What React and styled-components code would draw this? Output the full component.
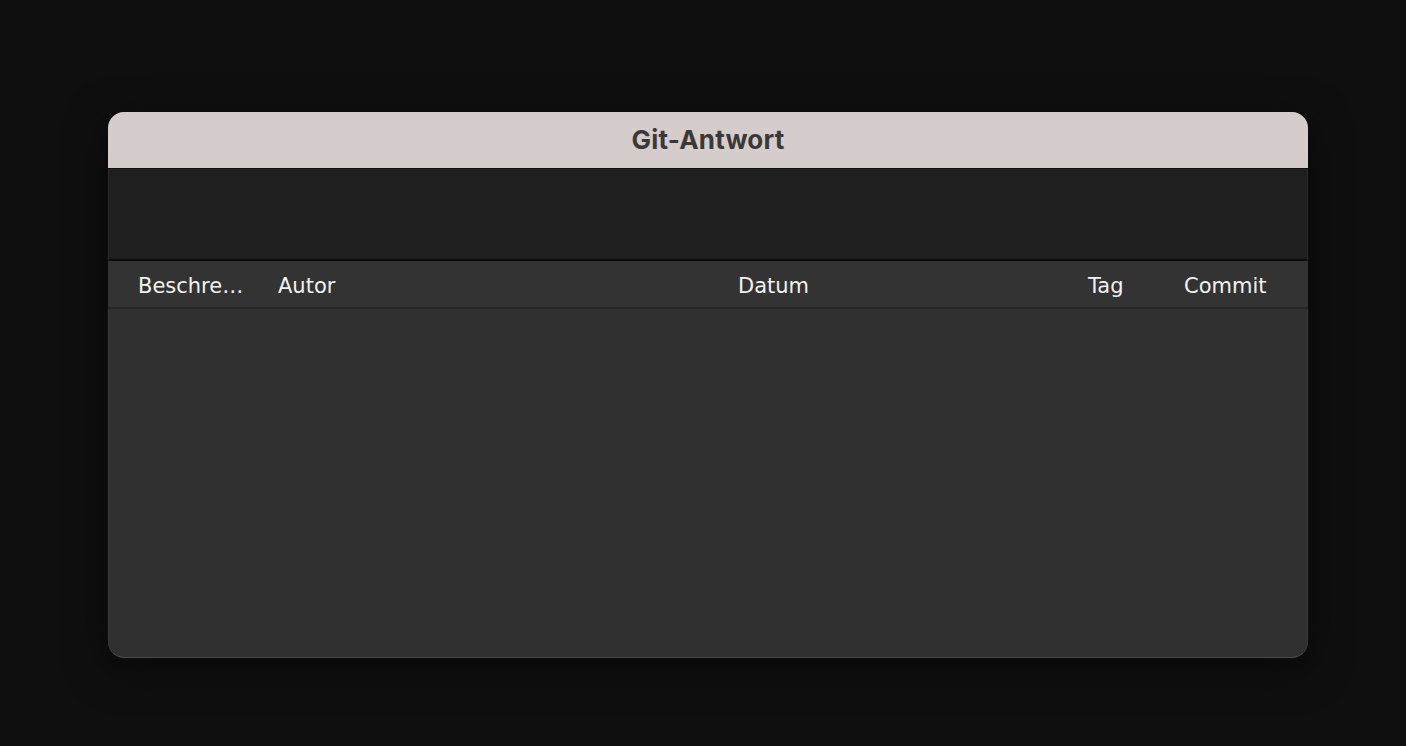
import React from 'react'
import styled, { createGlobalStyle } from 'styled-components'

const GlobalStyle = createGlobalStyle`
  html, body {
    margin: 0;
    padding: 0;
    background: #0f0f0f;
  }
`

const Page = styled.div`
  width: 1406px;
  height: 746px;
  box-sizing: border-box;
  padding: 112px 0 0 108px;
  background: #0f0f0f;
`

const Window = styled.div`
  width: 1200px;
  height: 546px;
  display: flex;
  flex-direction: column;
  border-radius: 16px;
  overflow: hidden;
  background: #2f2f2f;
  box-shadow: 0 10px 40px rgba(0, 0, 0, 0.5);
`

const TitleBar = styled.div`
  height: 57px;
  flex: none;
  box-sizing: border-box;
  padding-bottom: 2px;
  display: flex;
  align-items: center;
  justify-content: center;
  background: #d4cdcb;
  border-bottom: 1px solid #111;
  font-family: Inter, 'Noto Sans', sans-serif;
  font-weight: 700;
  font-size: 26px;
  color: #3b3938;
  letter-spacing: 0.2px;
`

const Toolbar = styled.div`
  height: 90px;
  flex: none;
  background: #1f1f1f;
  border-bottom: 2px solid #0c0c0c;
  border-left: 1px solid #2c2c2c;
  border-right: 1px solid #2c2c2c;
`

const HeaderRow = styled.div`
  height: 48px;
  flex: none;
  box-sizing: border-box;
  padding: 3px 0 0 30px;
  display: flex;
  align-items: center;
  background: #333333;
  border-bottom: 2px solid #262626;
  font-family: 'DejaVu Sans', sans-serif;
  font-size: 21px;
  color: #f2f2f2;
`

const HeaderCell = styled.div`
  width: ${p => p.$w}px;
  flex: none;
  white-space: nowrap;
`

const Body = styled.div`
  flex: 1;
  background: #303030;
  border-bottom: 1px solid #4a4a4a;
  border-left: 1px solid #3a3a3a;
  border-right: 1px solid #3a3a3a;
  border-radius: 0 0 16px 16px;
`

const columns = [
  { name: 'Beschre…', w: 140 },
  { name: 'Autor', w: 460 },
  { name: 'Datum', w: 350 },
  { name: 'Tag', w: 96 },
  { name: 'Commit', w: 110 }
]

export default function App() {
  return (
    <>
      <GlobalStyle />
      <Page>
        <Window>
          <TitleBar>Git-Antwort</TitleBar>
          <Toolbar />
          <HeaderRow>
            {columns.map((c, i) => (
              <HeaderCell key={i} $w={c.w}>
                {c.name}
              </HeaderCell>
            ))}
          </HeaderRow>
          <Body />
        </Window>
      </Page>
    </>
  )
}
